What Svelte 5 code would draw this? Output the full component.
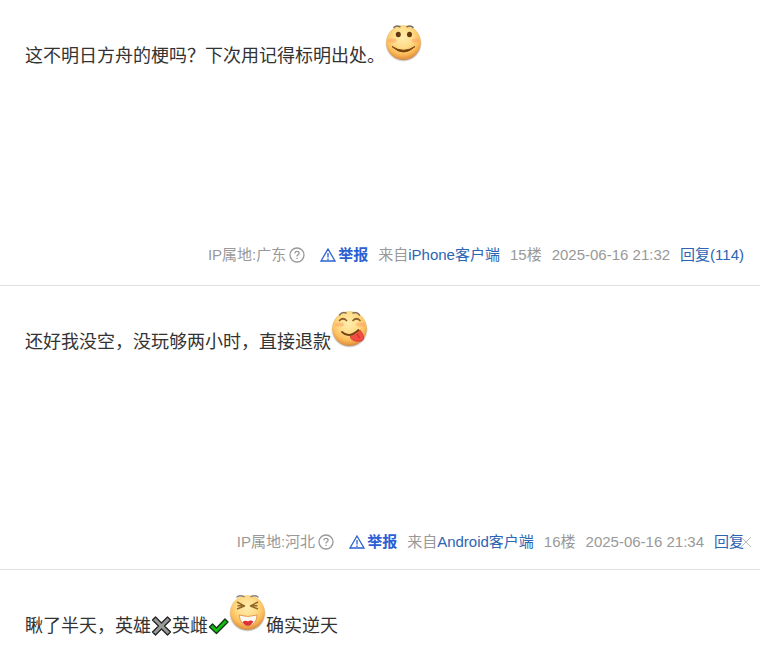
<script>
  const posts = [
    { text: ['这不明日方舟的梗吗？下次用记得标明出处。', { icon: 'smile' }], place: '广东', client: 'iPhone客户端', floor: 15, time: '2025-06-16 21:32', replies: 114 },
    { text: ['还好我没空，没玩够两小时，直接退款', { icon: 'tongue' }], place: '河北', client: 'Android客户端', floor: 16, time: '2025-06-16 21:34', closable: true },
    { text: ['瞅了半天，英雄', { icon: 'cross' }, '英雌', { icon: 'check' }, { icon: 'laugh' }, '确实逆天'] }
  ];
</script>

{#snippet face(kind)}
  <svg class="face" viewBox="0 0 37 38" role="img" aria-label={kind}>
    <defs>
      <radialGradient id="skin-{kind}" cx="48%" cy="35%" r="65%">
        <stop offset="0" stop-color="#ffedb0" />
        <stop offset="0.45" stop-color="#ffdc88" />
        <stop offset="0.75" stop-color="#fcbd5a" />
        <stop offset="1" stop-color="#df8a38" />
      </radialGradient>
      <radialGradient id="shade-{kind}">
        <stop offset="0.85" stop-color="#665544" stop-opacity="0.7" />
        <stop offset="1" stop-color="#999" stop-opacity="0" />
      </radialGradient>
    </defs>
    <ellipse cx="18.500" cy="19.500" rx="18.500" ry="18.500" fill="url(#shade-{kind})" />
    <circle cx="18.500" cy="18.500" r="17.300" fill="url(#skin-{kind})" />
    {#if kind === 'smile'}
      <path d="M9 3.500Q11 1 15 2.700M22 2.700Q26 1 28 3.500" fill="none" stroke="#75695a" stroke-width="1.500" stroke-linecap="round" />
      <ellipse cx="13.300" cy="10.500" rx="2.500" ry="2.700" fill="#673712" />
      <ellipse cx="24.500" cy="10.500" rx="2.500" ry="2.700" fill="#673712" />
      <ellipse cx="7" cy="16.500" rx="4.500" ry="2" fill="#ff9661" opacity="0.45" />
      <ellipse cx="30.500" cy="16.500" rx="4" ry="2" fill="#ff9661" opacity="0.45" />
      <path d="M7 22.500Q18.500 33.500 30 22.500Q18.500 30 7 22.500Z" fill="#74400f" stroke="#74400f" stroke-width="0.9" stroke-linejoin="round" />
    {:else if kind === 'tongue'}
      <path d="M8.500 5Q11 1.500 15 3M22 3Q26 1.500 28.500 5" fill="none" stroke="#84705a" stroke-width="1.500" stroke-linecap="round" />
      <path d="M8.500 10.500Q12 7 15.500 10.500M22 10.500Q25.500 7 29 10.500" fill="none" stroke="#8b5a28" stroke-width="1.700" stroke-linecap="round" />
      <ellipse cx="8.500" cy="14.500" rx="4.500" ry="2" fill="#ff9661" opacity="0.45" />
      <ellipse cx="29.500" cy="14.500" rx="4.500" ry="2" fill="#ff9661" opacity="0.45" />
      <path d="M19.500 26C18.500 30 25 32 30 31C34.500 30.500 33 25 29 20Q26 25 19.500 26Z" fill="#f34c43" stroke="#cf312b" stroke-width="0.7" />
      <path d="M26 24L28.500 28" stroke="#bd2527" stroke-width="1" />
      <path d="M11 22Q18 29 27.500 20" fill="none" stroke="#794214" stroke-width="1.800" stroke-linecap="round" />
    {:else}
      <path d="M8 3Q11 .7 15 2.600M22 2.600Q26 .7 29 3" fill="none" stroke="#8b8377" stroke-width="1.500" stroke-linecap="round" />
      <path d="M8 8L15.500 12L8 15M8.500 11.800H14M29 8L21.500 12L29 15M28.500 11.800H23" fill="none" stroke="#956a27" stroke-width="1.500" stroke-linejoin="round" />
      <path d="M10 21Q18.500 24 28 21Q27.500 31 19 32Q11.500 31 10 21Z" fill="#fffaf0" stroke="#d98a42" stroke-width="0.8" />
      <path d="M13.500 28Q16.500 26 19 27.500Q21.500 25.500 24.500 27.500Q22 31.700 19 31.700Q15.500 31.500 13.500 28Z" fill="#dd3037" />
    {/if}
  </svg>
{/snippet}

{#snippet mark(kind)}
  <svg class="mark" viewBox="0 0 21 22" role="img" aria-label={kind}>
    {#if kind === 'cross'}
      <path d="M4.500 2L10.500 8L16.500 2L19.500 5L13.500 11L19.500 17L16.500 20L10.500 14L4.500 20L1.500 17L7.500 11L1.500 5Z" fill="#999" stroke="#222" stroke-width="1.300" stroke-linejoin="round" />
    {:else}
      <path d="M1.500 12L4.500 9L8.500 13L17 4L20 7L8.500 18.500Z" fill="#10c010" stroke="#163016" stroke-width="1.300" stroke-linejoin="round" />
    {/if}
  </svg>
{/snippet}

<main>
  {#each posts as post}
    <article class="post" class:tight={post.closable}>
      <p class="body" class:full={post.client}>{#each post.text as part}{#if typeof part === 'string'}{part}{:else if part.icon === 'cross' || part.icon === 'check'}{@render mark(part.icon)}{:else}{@render face(part.icon)}{/if}{/each}</p>
      {#if post.client}
        <footer>
          <span class="place">IP属地:{post.place}
            <svg class="help" viewBox="0 0 16 16" aria-hidden="true">
              <circle cx="8" cy="8" r="7" />
              <path d="M5.900 6.400Q6 4.400 8 4.400Q10.100 4.400 10.100 6.200Q10.100 7.300 8.900 7.900Q8 8.400 8 9.500M8 10.800V12.100" />
            </svg>
          </span>
          <a class="report" href="#report">
            <svg viewBox="0 0 16 16" aria-hidden="true">
              <path d="M8 2L15 14H1ZM8 6V10.500M8 11.500V13" />
            </svg>举报</a>
          <span>来自<a href="#client">{post.client}</a></span>
          <span>{post.floor}楼</span>
          <time>{post.time}</time>
          <span class="reply">
            <a href="#reply">回复{post.replies ? `(${post.replies})` : ''}</a>
            {#if post.closable}
              <button aria-label="关闭">
                <svg viewBox="0 0 10 10" aria-hidden="true"><path d="M0 0L10 10M10 0L0 10" /></svg>
              </button>
            {/if}
          </span>
        </footer>
      {/if}
    </article>
  {/each}
</main>

<style>
  :global(body) {
    margin: 0;
    background: #fff;
  }
  main {
    font-family: "Liberation Sans", "Noto Sans CJK SC", sans-serif;
    color: #333;
  }
  .post {
    padding: 24px 16px 15px 25px;
  }
  .post + .post {
    border-top: 1px solid #e1e1e4;
  }
  .post.tight {
    padding-bottom: 12px;
  }
  .body {
    margin: 0;
    font-size: 18px;
    line-height: 24px;
  }
  .body.full {
    min-height: 216px;
  }
  .post + .post .body.full {
    min-height: 217px;
  }
  .face {
    width: 37px;
    height: 38px;
  }
  .mark {
    width: 21px;
    height: 22px;
    vertical-align: -5px;
  }
  footer {
    display: flex;
    flex-wrap: wrap;
    justify-content: flex-end;
    align-items: center;
    gap: 0 10px;
    font-size: 15px;
    line-height: 30px;
    color: #999;
  }
  a {
    color: #2d64b3;
    text-decoration: none;
  }
  .place,
  .report {
    display: flex;
    align-items: center;
    gap: 3px;
  }
  .place {
    margin-right: 5px;
  }
  .report {
    gap: 2px;
    color: #2b60d4;
    font-weight: 700;
  }
  footer svg {
    width: 16px;
    height: 16px;
    fill: none;
    stroke: currentColor;
    stroke-width: 1.300;
  }
  .reply {
    position: relative;
  }
  button {
    position: absolute;
    top: 10px;
    right: -7px;
    display: flex;
    padding: 0;
    border: 0;
    background: none;
    color: #bbb;
    cursor: pointer;
  }
  footer button svg {
    width: 10px;
    height: 10px;
    stroke-width: 1;
  }
</style>
